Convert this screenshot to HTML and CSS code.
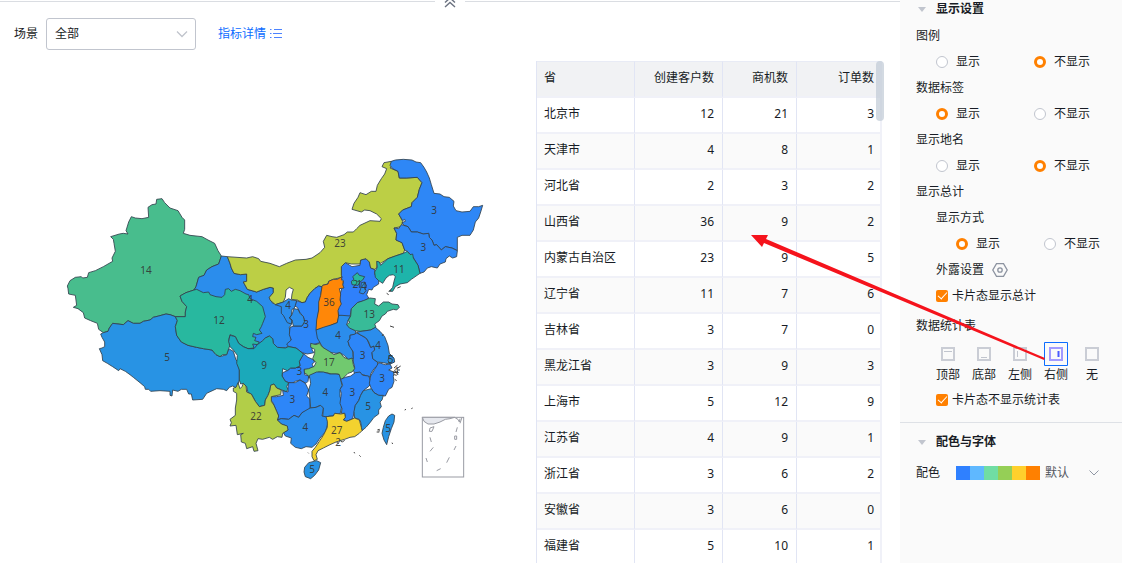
FILE: index.html
```html
<!DOCTYPE html>
<html lang="zh-CN">
<head>
<meta charset="utf-8">
<title>地图设置</title>
<link rel="stylesheet" href="styles.css">
</head>
<body>
<div class="page">
  <main class="board">
    <div class="collapse-bar">
      <span class="collapse-line"></span>
      <button class="collapse-button" type="button" aria-label="收起">
        <svg width="12" height="9" viewBox="0 0 12 9"><path d="M1 2.500 6 -2l5 4.500M1 7 6 2.500 11 7" fill="none" stroke="#6b7280" stroke-width="1.400"/></svg>
      </button>
      <span class="collapse-line"></span>
    </div>
    <div class="filters">
      <label for="scene">场景</label>
      <div class="select-box">
        <select id="scene"><option>全部</option></select>
        <svg class="select-arrow" width="12" height="8" viewBox="0 0 12 8"><path d="M1 1.500 6 6.500l5-5" fill="none" stroke="#c0c4cc" stroke-width="1.300"/></svg>
      </div>
      <a class="detail-link" href="#">指标详情
        <svg width="12" height="12" viewBox="0 0 12 12" fill="none" stroke="#4c83ff"><path d="M0 1.500h1.500M0 5.500h1.500M0 9.500h1.500M4 1.500h8M3 5.500h9M4 9.500h8"/></svg>
      </a>
    </div>
    <div class="content">
      <section class="map-area">
        <svg class="map" viewBox="0 183 1608 1506" preserveAspectRatio="xMidYMin meet">
          <g class="provinces">
            <g transform="translate(180 570)">
              <path fill="#48bd8d" d="M22 288 30 272 46 262 64 260 68 264 82 262 86 248 106 242 130 230 158 214 156 204 166 184 162 160 160 148 152 140 178 132 190 130 204 132 198 122 206 96 214 80 226 84 246 86 266 82 264 52 276 44 288 42 290 28 306 26 314 38 330 54 354 62 366 82 374 90 374 118 370 130 390 136 426 140 444 150 464 160 474 182 484 198 476 222 456 230 440 240 432 256 416 262 408 290 402 300 378 308 360 318 366 334 380 350 376 366 376 380 346 380 330 374 318 372 296 378 280 382 270 390 250 394 240 400 220 400 204 392 190 404 174 402 158 400 148 414 144 424 130 428 116 418 112 400 92 392 74 384 70 368 54 356 40 352 50 346 46 316 26 312 24 296Z"/>
              <path fill="#2893e4" d="M130 428 144 424 148 414 158 400 174 402 190 404 204 392 220 400 240 400 250 394 270 390 280 382 296 378 318 372 330 374 346 380 352 392 346 410 350 436 364 456 384 466 410 472 430 476 456 480 468 494 480 500 500 494 506 476 520 484 528 510 538 520 538 570 530 594 518 588 508 592 500 602 490 598 470 596 440 610 428 628 398 630 394 612 386 612 380 598 364 598 354 604 338 600 336 618 330 616 330 604 300 602 272 604 266 598 256 598 254 590 240 578 220 562 210 554 196 544 180 536 176 542 158 530 142 520 128 512 126 494 118 476 126 474 134 470 134 456 126 442 122 432Z"/>
            </g>
            <g transform="translate(660 660)">
              <path fill="#2b8dec" d="M4 108 22 110 30 130 34 144 42 160 62 164 80 162 80 184 70 186 82 208 110 216 130 208 150 202 160 204 160 218 148 232 158 250 178 250 214 286 214 314 208 322 210 344 214 360 206 378 196 384 172 382 160 370 158 356 148 348 136 354 128 362 118 374 112 390 60 380 20 250 -20 240 -78 210 -72 200 -64 172 -48 166 -40 150 -24 140 -4 132Z"/>
            </g>
            <g transform="translate(180 570)">
              <path fill="#28b89f" d="M360 318 378 308 402 300 410 298 430 308 446 306 450 314 468 320 486 322 494 314 496 298 506 296 514 304 526 298 540 302 558 312 566 314 570 326 590 334 608 350 616 380 608 400 604 410 598 420 606 430 590 434 580 430 578 440 588 442 584 452 598 456 592 464 578 462 582 474 564 476 550 470 536 460 526 440 510 434 506 450 510 466 506 476 500 494 488 494 480 500 468 494 456 480 430 476 410 472 384 466 364 456 350 436 346 410 352 392 346 380 376 380 376 366 380 350 366 334Z"/>
            </g>
            <g transform="translate(990 450)">
              <path fill="#2f80fb" d="M34 350 46 338 66 350 90 346 92 330 108 326 118 336 122 354 134 358 134 372 146 392 146 402 130 412 126 420 116 418 110 434 116 444 104 452 82 458 64 478 60 500 46 502 26 496 20 476 32 460 28 440 34 420 38 406 40 392 34 386Z"/>
            </g>
            <g transform="translate(660 660)">
              <path fill="#bccf45" d="M22 110 80 114 98 110 116 116 122 124 150 130 178 140 200 130 226 120 258 118 276 114 300 98 314 82 310 64 320 46 336 50 350 52 372 44 382 36 400 36 410 26 420 16 450 2 480 4 484 -4 470 -18 450 -28 434 -30 424 -24 396 -32 402 -50 414 -68 420 -82 438 -76 454 -86 468 -86 472 -104 484 -124 494 -138 500 -154 486 -160 492 -172 514 -176 520 -168 510 -156 534 -146 538 -126 560 -126 592 -128 606 -112 598 -92 592 -68 576 -52 574 -40 548 -30 536 -18 548 4 544 20 522 24 530 40 528 60 546 68 554 90 550 100 526 108 504 116 482 130 472 124 470 144 464 148 452 144 448 126 438 116 422 120 420 132 394 132 376 128 364 140 364 166 366 172 340 178 326 184 324 192 308 196 304 200 296 198 284 206 270 220 262 232 256 246 246 248 232 240 214 238 216 222 220 208 208 202 198 210 196 232 190 246 166 254 150 240 148 232 160 218 160 204 150 202 130 208 110 216 82 208 70 186 80 184 80 162 62 164 42 160 34 144 30 130Z"/>
              <path fill="#2d86f8" d="M296 198 306 200 302 226 296 270 290 330 292 340 300 360 300 368 278 374 276 390 282 398 262 402 246 398 228 384 206 380 200 372 214 360 208 344 210 322 222 318 246 318 254 304 250 290 240 278 232 262 224 258 230 242 246 248 256 246 262 232 270 220 284 206Z"/>
              <path fill="#2b8dec" d="M166 254 178 250 190 246 206 236 214 240 230 242 226 256 222 266 216 268 214 286 208 294 216 300 214 312 202 308 190 286 184 280 184 260ZM222 266 234 268 240 280 250 290 254 304 246 318 220 318 216 300 208 294 216 284Z"/>
              <path fill="#ff8708" d="M306 200 308 196 324 192 326 184 340 178 352 178 366 170 364 180 370 184 368 194 372 204 358 206 362 222 360 240 364 252 358 262 354 272 356 292 352 308 336 314 322 322 306 326 288 330 290 300 296 270 296 246 302 226Z"/>
            </g>
            <g transform="translate(990 450)">
              <path fill="#2e87f6" d="M184 34 196 30 220 28 246 30 258 36 272 38 282 52 290 66 298 84 304 104 312 130 330 132 342 140 358 142 372 154 370 168 378 182 396 186 420 184 430 170 446 170 458 166 452 186 446 204 436 216 430 240 420 256 396 256 382 262 382 302 366 294 346 290 334 300 320 284 312 286 306 270 298 262 296 250 280 252 262 246 244 246 234 230 222 226 216 218 226 214 224 208 218 212 206 192 218 180 244 170 246 158 262 142 268 118 276 98 262 82 230 84 208 84 204 64 188 56 180 46Z"/>
              <path fill="#2e87f6" d="M192 234 206 236 214 224 234 230 244 246 262 246 280 252 296 250 298 262 306 270 312 286 320 284 334 300 346 290 366 294 382 302 380 320 368 324 358 318 348 326 346 336 330 342 322 354 304 350 292 354 282 366 270 370 264 346 248 320 232 304 224 300 216 278 198 270 200 250Z"/>
              <path fill="#1eb4aa" d="M232 304 240 314 248 312 250 324 264 346 270 370 244 388 232 398 210 402 196 410 188 424 178 424 188 412 192 394 196 380 190 374 178 376 168 384 158 400 146 392 136 382 134 366 142 352 140 334 148 336 152 346 174 326 196 318 220 310Z"/>
            </g>
            <g transform="translate(810 810)">
              <path fill="#28b89f" d="M262 8 268 16 284 20 278 30 270 36 264 46 246 44 244 34 252 28 248 20Z"/>
              <path fill="#2b8dec" d="M274 38 284 36 290 48 284 54 288 62 280 72 268 68 272 56Z"/>
              <path fill="#2b8dec" d="M138 180 160 172 186 164 202 158 206 136 216 136 242 138 234 152 230 164 238 172 256 182 258 192 240 196 240 206 234 214 238 228 246 234 248 246 250 266 236 268 222 256 210 248 198 250 176 246 158 232 150 218 142 204Z"/>
              <path fill="#38bb98" d="M242 138 244 116 262 98 280 92 300 84 316 86 314 102 326 108 340 96 356 96 366 102 384 104 388 112 380 120 370 118 352 124 346 132 336 138 328 152 314 162 318 172 302 180 288 182 272 184 256 182 238 174 230 164 240 156 234 152Z"/>
              <path fill="#2d86f8" d="M258 188 270 194 290 206 302 232 312 228 314 240 306 248 308 266 322 276 324 286 312 296 302 312 300 322 280 314 262 312 254 312 250 300 254 292 250 276 250 246 238 228 234 214 240 206 240 196 256 192Z"/>
              <path fill="#2b8dec" d="M260 186 288 182 302 180 316 172 330 184 344 200 354 226 358 250 370 262 372 276 358 282 340 278 322 276 308 266 306 248 314 240 312 228 302 232 296 216 290 206 282 200 270 194Z"/>
              <path fill="#2893e4" d="M358 256 372 264 374 276 360 282 354 272Z"/>
              <path fill="#71c96f" d="M122 220 138 224 148 220 158 232 178 244 192 254 210 248 222 262 236 268 246 264 250 284 254 296 246 306 234 310 220 324 212 330 206 312 184 312 170 308 146 306 134 316 116 324 112 314 102 308 102 292 120 290 132 290 138 278 128 266 134 250 134 238 122 232Z"/>
            </g>
            <g transform="translate(660 1020)">
              <path fill="#2d86f8" d="M250 40 264 52 278 58 284 66 276 72 280 80 266 86 252 88 254 104 266 108 264 124 258 130 240 120 226 124 216 130 206 128 196 124 186 108 188 98 202 92 212 84 226 84 240 78 238 64Z"/>
              <path fill="#1ba9ba" d="M30 -14 46 -10 56 10 70 20 84 26 102 26 112 14 128 2 136 -6 148 -12 158 -4 160 10 172 22 196 24 206 20 228 24 246 38 250 44 238 64 240 78 226 84 212 84 202 92 188 86 186 108 196 124 206 128 200 140 204 148 198 156 186 150 170 144 162 132 152 136 150 150 144 166 136 180 134 196 118 200 106 184 94 162 84 158 80 140 70 130 62 132 58 120 58 90 50 70 52 46 40 30 30 20 26 4Z"/>
              <path fill="#2d86f8" d="M204 142 206 128 226 128 240 120 256 130 262 142 266 150 260 168 270 178 270 204 260 214 246 218 236 232 222 226 206 238 184 236 172 240 176 228 168 210 160 190 154 182 154 170 170 170 190 166 188 152 204 156Z"/>
              <path fill="#2b8dec" d="M268 106 290 96 310 96 330 102 348 102 358 104 362 118 366 136 360 152 360 170 366 186 364 206 360 222 346 220 338 228 326 228 322 240 308 232 310 204 300 196 288 202 272 204 270 178 266 150 272 130Z"/>
              <path fill="#2b8dec" d="M172 240 184 236 206 238 222 226 236 232 246 218 270 204 288 202 302 196 310 204 306 228 326 232 322 256 316 276 300 294 288 312 276 322 258 320 244 326 226 322 212 310 214 294 196 288 190 278 204 270 200 258 184 252Z"/>
              <path fill="#b2ce48" d="M70 130 78 138 80 156 94 162 106 184 118 200 134 196 136 180 144 166 150 150 152 136 162 132 170 144 184 150 182 164 154 170 154 184 162 196 170 214 176 228 172 240 184 252 202 258 204 270 188 280 186 292 172 290 158 298 148 292 128 298 114 296 108 310 114 332 102 334 98 320 80 326 76 310 64 306 62 284 70 280 52 284 48 256 30 258 34 248 30 238 46 226 46 204 50 180 50 160 40 154 40 144 48 142 54 128 60 146 66 140Z"/>
              <path fill="#2893e4" d="M254 382 266 368 290 362 302 368 296 390 284 406 272 416 256 410 252 396Z"/>
            </g>
            <g transform="translate(960 1020)">
              <path fill="#2d86f8" d="M62 118 76 112 92 108 106 98 120 96 128 106 146 108 152 124 148 138 130 152 122 166 116 182 106 196 104 210 98 236 80 244 70 240 76 232 74 220 64 220 66 206 60 190 64 160 60 148 68 136Z"/>
              <path fill="#2d86f8" d="M152 108 164 88 176 68 196 74 210 72 216 84 206 90 222 96 220 110 222 124 216 142 206 148 196 168 176 166 162 158 154 146 148 130Z"/>
              <path fill="#2893e4" d="M130 152 154 146 162 158 176 166 190 166 186 180 180 186 184 200 176 210 176 222 162 232 150 248 138 262 126 272 122 246 118 238 104 234 102 214 106 196 116 182 122 166Z"/>
              <path fill="#f3d22f" d="M18 230 40 228 44 220 62 222 74 220 76 232 70 240 80 244 104 234 118 240 124 262 126 272 118 280 104 290 90 292 74 298 60 302 48 306 30 314 10 324 -6 332 -12 344 -8 358 -18 362 -24 350 -24 334 -14 322 -2 304 10 286 22 262 22 244Z"/>
              <path fill="#2893e4" d="M206 228 216 222 224 226 222 246 214 266 206 290 200 314 192 300 186 280 190 262 196 242Z"/>
            </g>
          </g>
          <g class="islands" transform="translate(960 1020)">
            <path d="M222 84 232 76M230 86 242 78M232 90 240 90M224 92 234 104M224 98 234 94M222 104 230 106M224 118 230 122M172 270 178 268 176 278M170 276 174 276M216 308 218 312M254 210 258 208M274 206 278 204M102 336 104 340M118 346 122 350M62 304 68 306 74 300M50 306 56 312M-36 338 -34 340M210 -42 222 -38M190 -18 186 -12M232 -156 242 -160M206 -146 214 -150M200 -140 206 -136"/>
          </g>
          <g class="inset" transform="translate(960 1020)">
            <rect x="307" y="232" width="124" height="179" fill="#fff"/>
            <path fill="#e6e8ee" d="M307 232H404L390 236 376 238 360 246 342 252 324 252 312 244Z"/>
            <path d="M406 234 414 238 418 246 420 236M426 232 420 250M330 264 342 260 336 274 328 274ZM412 262 408 276M404 288H410V298H404ZM330 292 334 306M408 318 402 330M340 322 330 334M388 352 380 368M318 354 322 366M362 386 350 392"/>
          </g>
          <g class="map-labels">
            <text x="438" y="810">14</text><text x="657" y="959">12</text><text x="501" y="1072">5</text>
            <text x="750" y="898">4</text><text x="1020" y="730">23</text><text x="1302" y="629">3</text>
            <text x="1270" y="742">3</text><text x="1197" y="806">11</text><text x="987" y="906">36</text>
            <text x="864" y="914">4</text><text x="918" y="973">3</text><text x="1066" y="852">2</text>
            <text x="1078" y="852">1</text><text x="1092" y="858">4</text><text x="1108" y="941">13</text>
            <text x="1014" y="1006">4</text><text x="987" y="1087">17</text><text x="898" y="1112">3</text>
            <text x="792" y="1094">9</text><text x="1134" y="1034">4</text><text x="1088" y="1064">3</text>
            <text x="1172" y="1077">5</text><text x="1188" y="1114">4</text><text x="1146" y="1135">3</text>
            <text x="1104" y="1219">5</text><text x="976" y="1177">4</text><text x="1057" y="1177">3</text>
            <text x="877" y="1198">3</text><text x="916" y="1280">4</text><text x="768" y="1249">22</text>
            <text x="1010" y="1290">27</text><text x="1014" y="1327">2</text><text x="1164" y="1284">5</text>
            <text x="936" y="1407">5</text>
          </g>
        </svg>
      </section>
      <section class="table-area">
        <table class="stats">
          <colgroup><col class="col-name"><col class="col-customers"><col class="col-chances"><col class="col-orders"></colgroup>
          <thead><tr><th>省</th><th>创建客户数</th><th>商机数</th><th>订单数</th></tr></thead>
          <tbody>
            <tr><td>北京市</td><td>12</td><td>21</td><td>3</td></tr>
            <tr><td>天津市</td><td>4</td><td>8</td><td>1</td></tr>
            <tr><td>河北省</td><td>2</td><td>3</td><td>2</td></tr>
            <tr><td>山西省</td><td>36</td><td>9</td><td>2</td></tr>
            <tr><td>内蒙古自治区</td><td>23</td><td>9</td><td>5</td></tr>
            <tr><td>辽宁省</td><td>11</td><td>7</td><td>6</td></tr>
            <tr><td>吉林省</td><td>3</td><td>7</td><td>0</td></tr>
            <tr><td>黑龙江省</td><td>3</td><td>9</td><td>3</td></tr>
            <tr><td>上海市</td><td>5</td><td>12</td><td>9</td></tr>
            <tr><td>江苏省</td><td>4</td><td>9</td><td>1</td></tr>
            <tr><td>浙江省</td><td>3</td><td>6</td><td>2</td></tr>
            <tr><td>安徽省</td><td>3</td><td>6</td><td>0</td></tr>
            <tr><td>福建省</td><td>5</td><td>10</td><td>1</td></tr>
          </tbody>
        </table>
        <span class="scroll-thumb"></span>
      </section>
    </div>
  </main>

  <aside class="panel">
    <section class="panel-section">
      <h2><span class="caret"></span>显示设置</h2>
      <div class="row">图例</div>
      <div class="row options">
        <label><input type="radio" name="legend">显示</label>
        <label><input type="radio" name="legend" checked>不显示</label>
      </div>
      <div class="row">数据标签</div>
      <div class="row options">
        <label><input type="radio" name="data-label" checked>显示</label>
        <label><input type="radio" name="data-label">不显示</label>
      </div>
      <div class="row">显示地名</div>
      <div class="row options">
        <label><input type="radio" name="place">显示</label>
        <label><input type="radio" name="place" checked>不显示</label>
      </div>
      <div class="row">显示总计</div>
      <div class="row indent">显示方式</div>
      <div class="row options nested">
        <label><input type="radio" name="total" checked>显示</label>
        <label><input type="radio" name="total">不显示</label>
      </div>
      <div class="row indent">外露设置
        <button class="icon-button" type="button" aria-label="外露设置">
          <svg width="16" height="16" viewBox="0 0 16 16" fill="none" stroke="#8c93a0" stroke-width="1.300"><path d="M4.500 1.700h7L15.200 8l-3.700 6.300h-7L.8 8Z"/><circle cx="8" cy="8" r="2.200"/></svg>
        </button>
      </div>
      <div class="row indent"><label><input type="checkbox" checked>卡片态显示总计</label></div>
      <div class="row tall">数据统计表</div>
      <div class="positions">
        <button type="button"><svg width="24" height="24" viewBox="0 0 24 24"><path class="frame" d="M6 6h12v12H6Z"/><path d="M8 9.500h8"/></svg>顶部</button>
        <button type="button"><svg width="24" height="24" viewBox="0 0 24 24"><path class="frame" d="M6 6h12v12H6Z"/><path d="M9 15.500h6"/></svg>底部</button>
        <button type="button"><svg width="24" height="24" viewBox="0 0 24 24"><path class="frame" d="M6 6h12v12H6Z"/><path d="M9.500 9v6"/></svg>左侧</button>
        <button type="button" class="active"><svg width="24" height="24" viewBox="0 0 24 24"><path class="frame" d="M6 6h12v12H6Z"/><path class="bar" d="M14.500 9v6"/><path class="outline" d="M.5 .5h23v23H.5Z"/></svg>右侧</button>
        <button type="button"><svg width="24" height="24" viewBox="0 0 24 24"><path class="frame" d="M6 6h12v12H6Z"/></svg>无</button>
      </div>
      <div class="row indent"><label><input type="checkbox" checked>卡片态不显示统计表</label></div>
    </section>
    <section class="panel-section colors">
      <h2><span class="caret"></span>配色与字体</h2>
      <div class="palette">
        <label for="palette">配色</label>
        <div class="swatches"><i class="blue"></i><i class="sky"></i><i class="mint"></i><i class="green"></i><i class="yellow"></i><i class="orange"></i></div>
        <select id="palette"><option>默认</option></select>
        <svg width="10" height="6" viewBox="0 0 10 6"><path d="M.5 .5 5 5l4.500-4.500" fill="none" stroke="#8f96a3"/></svg>
      </div>
    </section>
  </aside>

  <svg class="pointer" width="300" height="130" viewBox="0 0 300 130">
    <path fill="#f5131c" d="M0 0 17 0 15 4 294 123 293 125 13 8 11 12Z"/>
  </svg>
</div>
</body>
</html>
```

FILE: styles.css
```css
* { box-sizing: border-box; }

body {
  margin: 0;
  background: #fff;
  color: #181c25;
  font: 12px/18px "Noto Sans", "Noto Sans CJK SC", sans-serif;
}

button, select, input { font: inherit; color: inherit; margin: 0; }
button { padding: 0; border: 0; background: none; }

.page {
  position: relative;
  display: flex;
  height: 100vh;
  overflow: hidden;
}

.board {
  flex: 1;
  min-width: 0;
  display: flex;
  flex-direction: column;
}

/* top bar and filters */
.collapse-bar { display: flex; height: 9px; }
.collapse-line { flex: 1; height: 2px; border-bottom: 1px solid #dadde2; }
.collapse-button { width: 30px; height: 9px; display: flex; justify-content: center; }
.collapse-button svg { overflow: hidden; }

.filters {
  display: flex;
  align-items: center;
  height: 52px;
  padding: 0 14px 2px;
}
.select-box { position: relative; margin: 0 22px 0 8px; }
.select-box select {
  width: 150px;
  height: 32px;
  padding: 0 8px;
  border: 1px solid #c1c5ce;
  border-radius: 3px;
  background: #fff;
  appearance: none;
}
.select-arrow { position: absolute; right: 8px; top: 12px; pointer-events: none; }
.detail-link {
  display: flex;
  align-items: center;
  gap: 4px;
  color: #0c6cff;
  text-decoration: none;
}

/* map */
.content { flex: 1; min-height: 0; display: flex; }
.map-area { flex: 1; min-width: 0; }
.map { display: block; width: 100%; height: auto; }
.provinces path { stroke: #33424d; stroke-width: 3; stroke-opacity: .85; stroke-linejoin: round; }
.islands path { fill: none; stroke: #444; stroke-width: 3; }
.inset { fill: none; stroke: #999ba3; stroke-width: 3; }
.map-labels { fill: #333; fill-opacity: .9; font-size: 30px; text-anchor: middle; }
.map-labels text { dominant-baseline: central; }

/* table */
.table-area { position: relative; width: 348px; margin-right: 16px; overflow: hidden; }
.stats {
  width: 346px;
  table-layout: fixed;
  border-collapse: separate;
  border-spacing: 0;
  border-left: 1px solid #e1e5f4;
}
.col-name { width: 98px; }
.col-customers { width: 88px; }
.col-chances { width: 74px; }
.stats th, .stats td {
  height: 36px;
  padding: 0 8px 2px;
  border-right: 1px solid #e1e5f4;
  border-bottom: 2px solid #f0f1f8;
  font-weight: 400;
  text-align: right;
}
.stats th { height: 37px; background: #f1f2f4; border-top: 1px solid #e8ebf5; }
.stats th:first-child, .stats td:first-child { text-align: left; padding: 0 7px 2px; }
.stats th:last-child, .stats td:last-child { padding-right: 6px; border-right: 2px solid #f0f1f8; }
.stats tbody tr:nth-child(even) { background: #fafafa; }
.scroll-thumb {
  position: absolute;
  top: 0;
  right: 0;
  width: 8px;
  height: 60px;
  border-radius: 4px;
  background: #c1cad6b3;
}

/* settings panel */
.panel { width: 222px; background: #fafafa; }
.panel-section { padding: 0 16px 9px; }
.panel h2 {
  display: flex;
  align-items: center;
  gap: 10px;
  margin: 0 0 5px;
  padding-left: 2px;
  font-size: 12px;
  line-height: 18px;
  font-weight: 700;
}
.caret {
  border: 4px solid transparent;
  border-top: 5px solid #c1c5ce;
  border-bottom: 0;
  width: 7px;
}
.row { display: flex; align-items: center; height: 26px; }
.row label { display: flex; align-items: center; }
.indent { padding-left: 20px; }
.options { padding-left: 20px; }
.options label { width: 98px; gap: 8px; white-space: nowrap; }
.options label:last-child { width: auto; }
.nested { padding-left: 40px; }
.nested label { width: 88px; }
.tall { height: 33px; }

input[type="radio"] {
  appearance: none;
  width: 12px;
  height: 12px;
  border: 1px solid #c1c5ce;
  border-radius: 50%;
  background: #fff;
}
input[type="radio"]:checked { border: 3px solid #ff8000; }
input[type="checkbox"] {
  appearance: none;
  display: grid;
  place-items: start center;
  width: 12px;
  height: 12px;
  margin-right: 4px;
  border-radius: 2px;
  background: #ff8000;
}
input[type="checkbox"]::before {
  content: "";
  width: 4px;
  height: 8px;
  border: solid #fff;
  border-width: 0 1px 1px 0;
  transform: rotate(42deg);
}
.icon-button { display: flex; margin-left: 8px; }

.positions { display: flex; gap: 12px; padding-left: 20px; margin-bottom: 3px; }
.positions button { width: 24px; display: flex; flex-direction: column; align-items: center; white-space: nowrap; }
.positions path { fill: none; stroke: #c1c5ce; }
.positions .frame { stroke: #cacdd5; stroke-width: 2; }
.positions .active .frame { stroke: #a29bff; }
.positions .active .bar { stroke: #4b5bff; stroke-width: 2; }
.positions .active .outline { stroke: #0c6cff; }

.colors { border-top: 1px solid #dee1e6; padding-top: 10px; }
.palette { display: flex; align-items: center; height: 26px; margin-top: 9px; }
.palette label { width: 40px; }
.palette select { width: 49px; padding: 0 0 0 5px; border: 0; background: none; appearance: none; color: #545861; }
.swatches { display: flex; }
.swatches i { width: 14px; height: 14px; }
.blue { background: #2f80ff; }
.sky { background: #5fb8ff; }
.mint { background: #70dda4; }
.green { background: #95cf56; }
.yellow { background: #ffd02c; }
.orange { background: #ff8000; }

/* arrow from the position setting to the table */
.pointer { position: absolute; top: 235px; right: 71px; pointer-events: none; }
```
